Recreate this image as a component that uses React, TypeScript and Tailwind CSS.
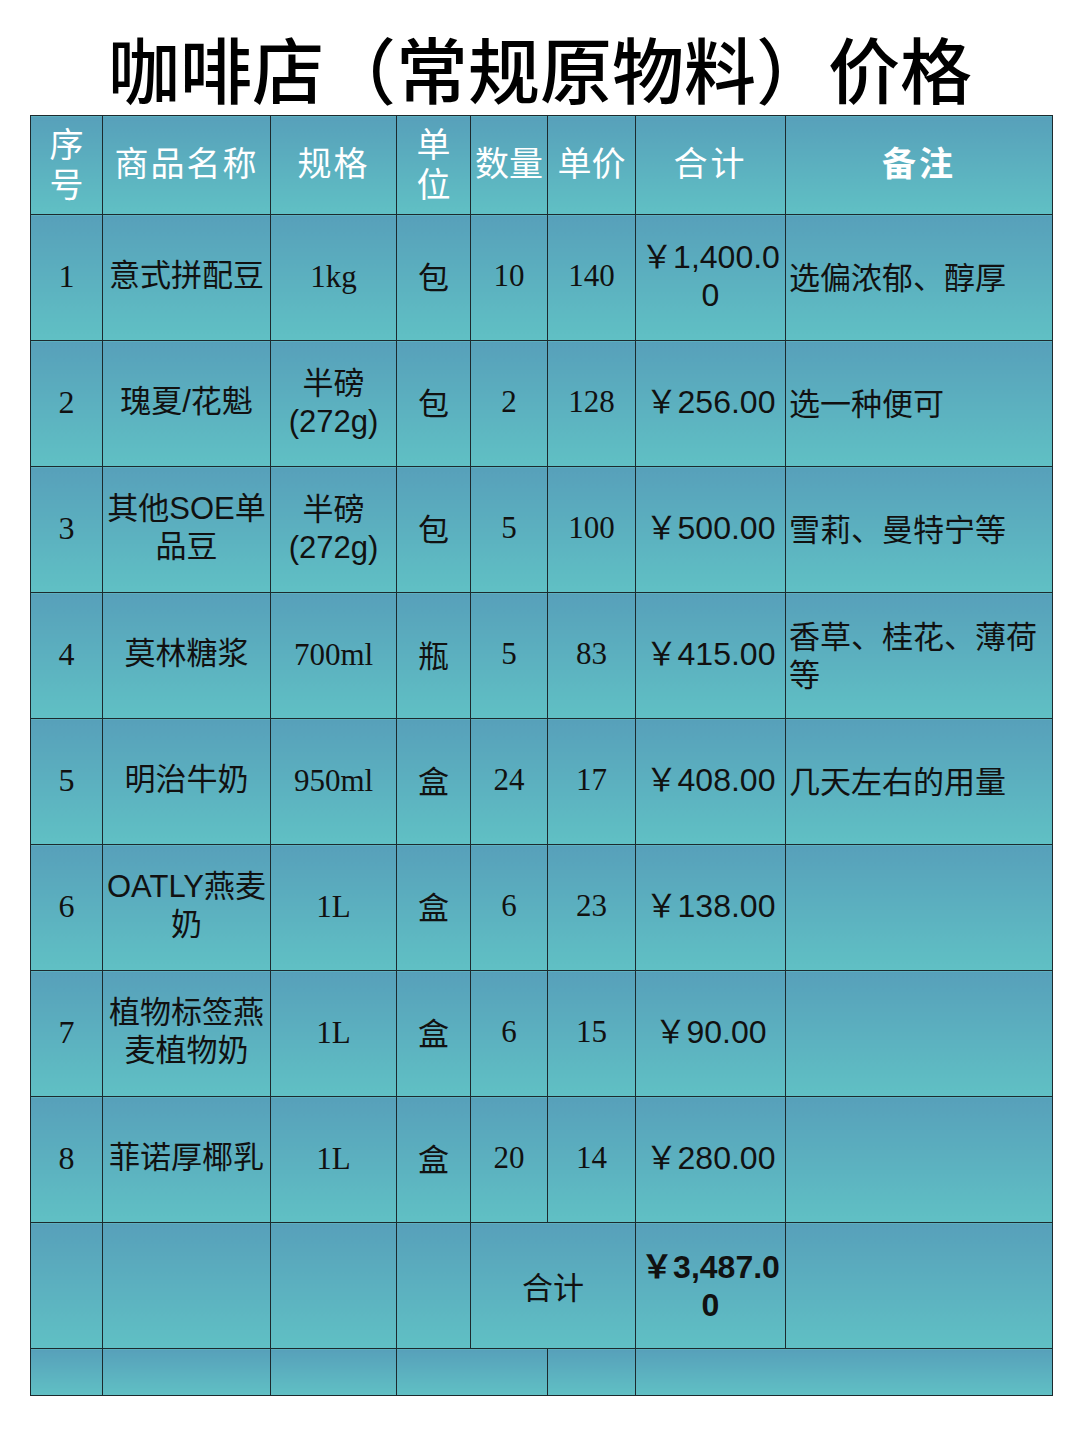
import React from "react";

const serif = "font-['Liberation_Serif','Noto_Sans_CJK_SC',serif]";
const sans = "font-['Liberation_Sans','Noto_Sans_CJK_SC',sans-serif]";
const cjk = "font-['Noto_Sans_CJK_SC',sans-serif]";

const cell =
  "border-[1.5px] border-[#1c2a2e] bg-linear-to-b from-[#57a0ba] to-[#60c0c4] align-middle p-0";

type Row = {
  no: string;
  name: React.ReactNode;
  spec: React.ReactNode;
  unit: string;
  qty: string;
  price: string;
  total: React.ReactNode;
  note: string;
};

const rows: Row[] = [
  { no: "1", name: "意式拼配豆", spec: <span className={serif}>1kg</span>, unit: "包", qty: "10", price: "140", total: <>￥1,400.0<br />0</>, note: "选偏浓郁、醇厚" },
  { no: "2", name: "瑰夏/花魁", spec: <>半磅<br /><span className={sans}>(272g)</span></>, unit: "包", qty: "2", price: "128", total: "￥256.00", note: "选一种便可" },
  { no: "3", name: <>其他SOE单<br />品豆</>, spec: <>半磅<br /><span className={sans}>(272g)</span></>, unit: "包", qty: "5", price: "100", total: "￥500.00", note: "雪莉、曼特宁等" },
  { no: "4", name: "莫林糖浆", spec: <span className={serif}>700ml</span>, unit: "瓶", qty: "5", price: "83", total: "￥415.00", note: "香草、桂花、薄荷等" },
  { no: "5", name: "明治牛奶", spec: <span className={serif}>950ml</span>, unit: "盒", qty: "24", price: "17", total: "￥408.00", note: "几天左右的用量" },
  { no: "6", name: <>OATLY燕麦<br />奶</>, spec: <span className={serif}>1L</span>, unit: "盒", qty: "6", price: "23", total: "￥138.00", note: "" },
  { no: "7", name: <>植物标签燕<br />麦植物奶</>, spec: <span className={serif}>1L</span>, unit: "盒", qty: "6", price: "15", total: "￥90.00", note: "" },
  { no: "8", name: "菲诺厚椰乳", spec: <span className={serif}>1L</span>, unit: "盒", qty: "20", price: "14", total: "￥280.00", note: "" },
];

export default function App() {
  return (
    <div className="w-[1080px] h-[1440px] bg-white">
      <h1 className={`h-[115px] pt-[24px] text-center text-[72px] leading-[86px] font-medium text-black ${cjk}`}>
        咖啡店（常规原物料）价格
      </h1>

      <table className="ml-[30px] w-[1022px] table-fixed border-collapse text-[#111]">
        <colgroup>
          <col className="w-[72px]" />
          <col className="w-[168px]" />
          <col className="w-[126px]" />
          <col className="w-[74px]" />
          <col className="w-[77px]" />
          <col className="w-[88px]" />
          <col className="w-[150px]" />
          <col className="w-[267px]" />
        </colgroup>
        <thead>
          <tr className={`h-[99px] text-white text-[34px] leading-[40px] ${cjk}`}>
            <th className={`${cell} font-normal pb-[4px]`}>序<br />号</th>
            <th className={`${cell} font-normal tracking-[2px] pb-[6px]`}>商品名称</th>
            <th className={`${cell} font-normal tracking-[2px] pb-[6px]`}>规格</th>
            <th className={`${cell} font-normal pb-[4px]`}>单<br />位</th>
            <th className={`${cell} font-normal pb-[6px]`}>数量</th>
            <th className={`${cell} font-normal pb-[6px]`}>单价</th>
            <th className={`${cell} font-normal tracking-[3px] pb-[6px]`}>合计</th>
            <th className={`${cell} font-bold tracking-[3px] pb-[6px]`}>备注</th>
          </tr>
        </thead>
        <tbody className={`text-[31px] leading-[38px] ${cjk}`}>
          {rows.map((r) => (
            <tr key={r.no} className="h-[126px]">
              <td className={`${cell} pb-[4px] text-center text-[32px] ${serif}`}>{r.no}</td>
              <td className={`${cell} pb-[4px] text-center ${sans}`}>{r.name}</td>
              <td className={`${cell} pb-[4px] text-center`}>{r.spec}</td>
              <td className={`${cell} pb-[4px] text-center`}>{r.unit}</td>
              <td className={`${cell} pb-[4px] text-center ${serif}`}>{r.qty}</td>
              <td className={`${cell} pb-[4px] text-center ${serif}`}>{r.price}</td>
              <td className={`${cell} pb-[4px] text-center text-[32px] ${sans}`}>{r.total}</td>
              <td className={`${cell} pb-[4px] pl-[3px] text-left`}>{r.note}</td>
            </tr>
          ))}
          <tr className="h-[126px]">
            <td className={cell}></td>
            <td className={cell}></td>
            <td className={cell}></td>
            <td className={cell}></td>
            <td colSpan={2} className={`${cell} text-center`}>合计</td>
            <td className={`${cell} text-center text-[32px] font-bold ${sans}`}>￥3,487.0<br />0</td>
            <td className={cell}></td>
          </tr>
          <tr className="h-[47px]">
            <td className={cell}></td>
            <td className={cell}></td>
            <td className={cell}></td>
            <td colSpan={2} className={cell}></td>
            <td className={cell}></td>
            <td colSpan={2} className={cell}></td>
          </tr>
        </tbody>
      </table>
    </div>
  );
}
